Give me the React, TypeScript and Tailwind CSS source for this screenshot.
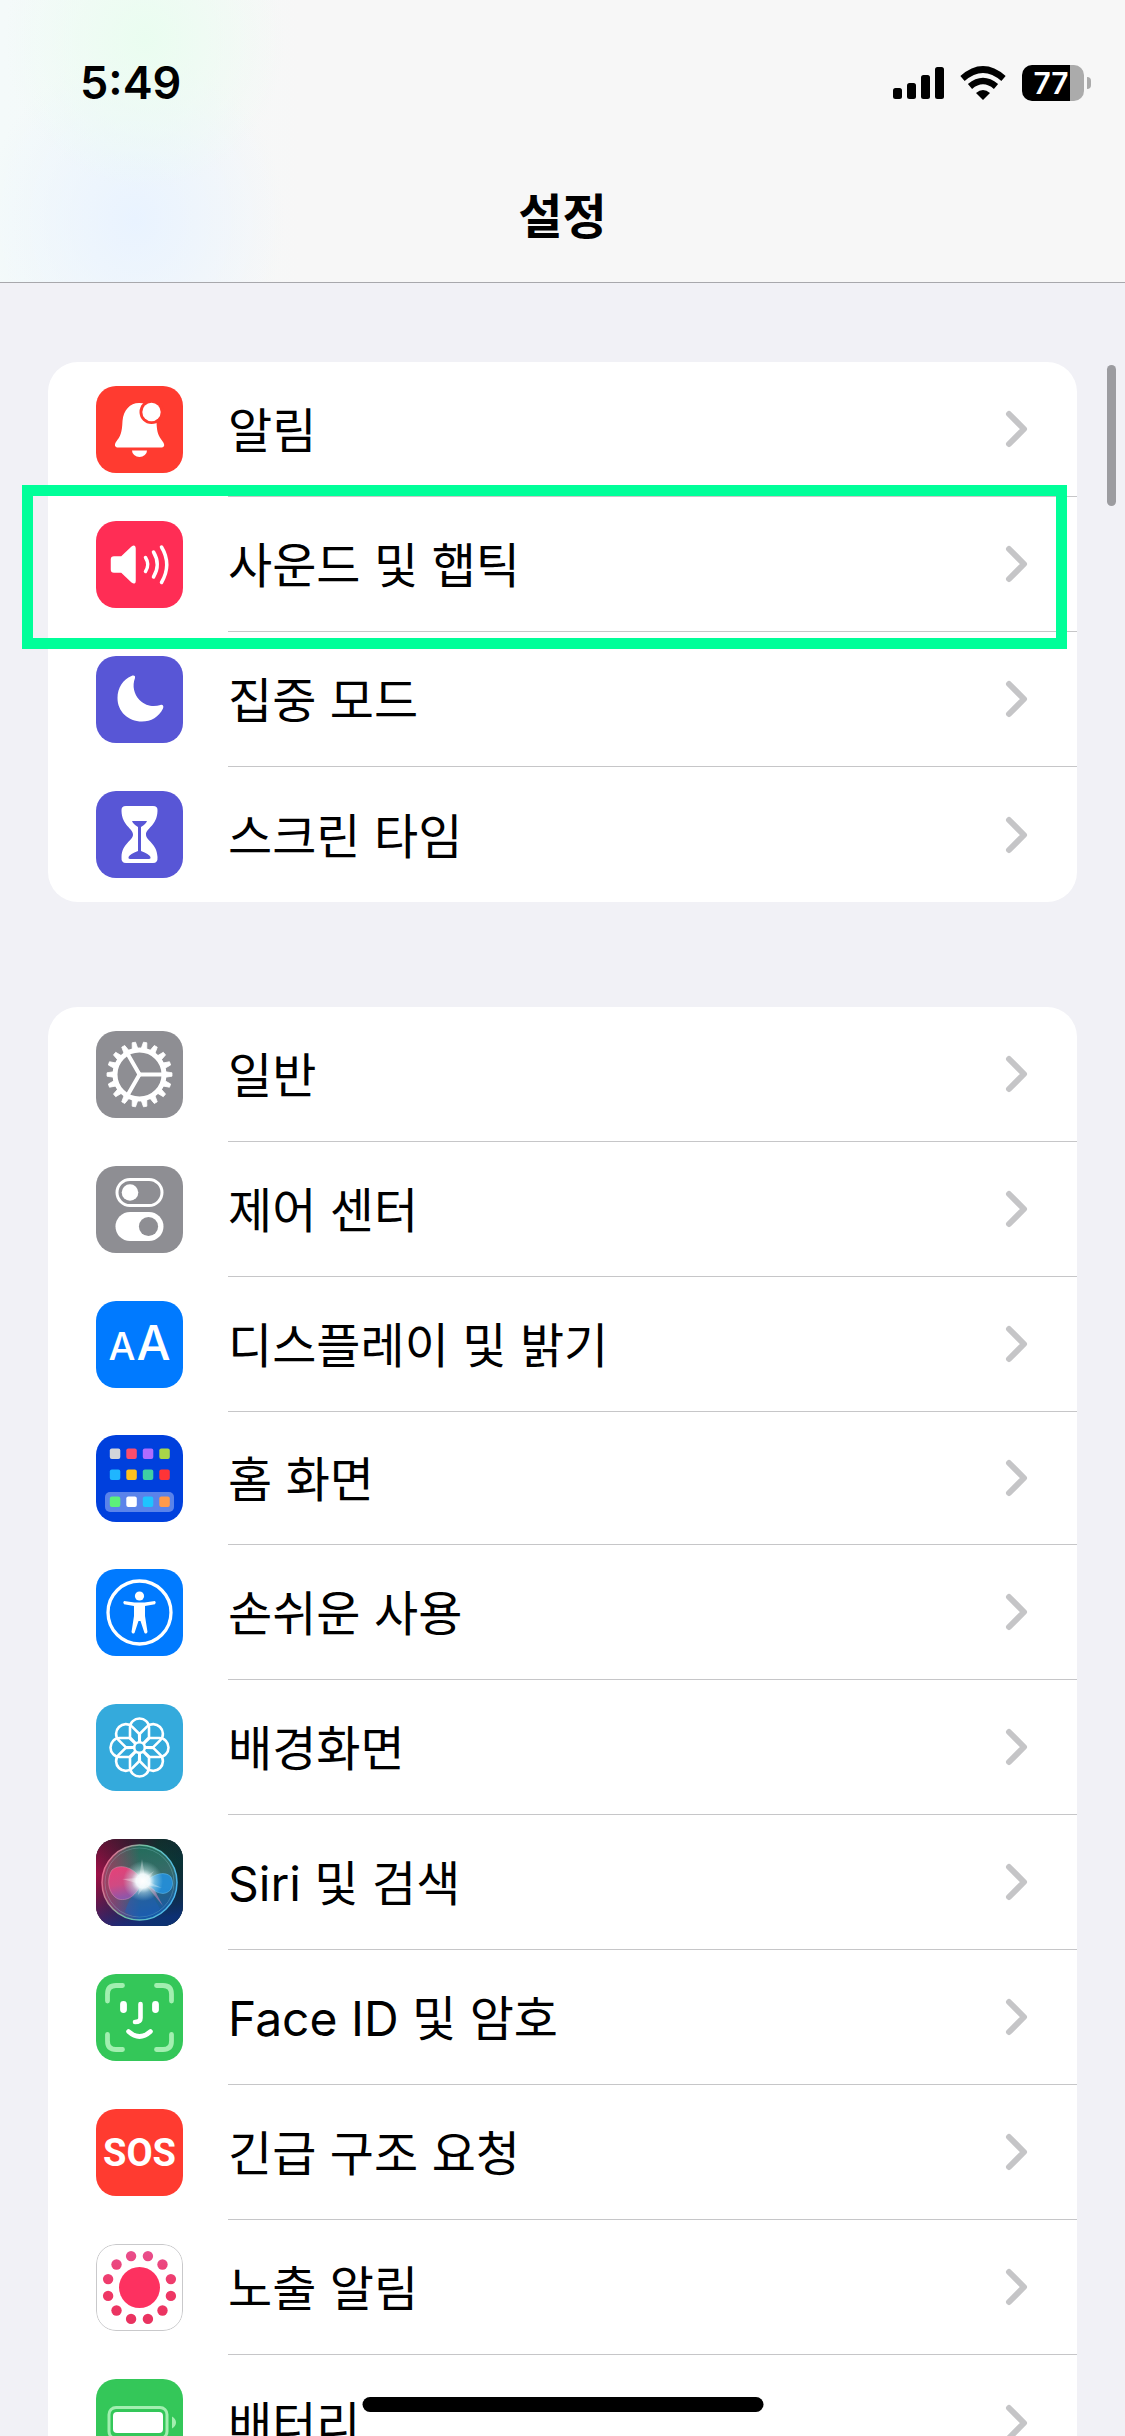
import React from "react";

const KO = "font-['Inter','Noto_Sans_CJK_KR',sans-serif]";

type GlyphProps = { children: React.ReactNode };

function Glyph({ children }: GlyphProps) {
  return (
    <svg viewBox="0 0 87 87" className="block size-full" aria-hidden="true">
      {children}
    </svg>
  );
}

const Bell = () => (
  <Glyph>
    <path
      d="M43 17C34 17 27.500 24 26.500 35C26 47 24.500 50 20 56C18 59 19 61.500 22 61.500H65C68.500 61.500 69 59 67 56C62 49 61 47 60.500 36C60 25 53 17 43 17Z"
      fill="#fff"
    />
    <path d="M36 64.500H51A7.500 6.500 0 0 1 36 64.500Z" fill="#fff" />
    <circle cx="55.500" cy="26" r="12" fill="#ff3b30" />
    <circle cx="55.500" cy="26" r="9.200" fill="#fff" />
  </Glyph>
);

const Speaker = () => (
  <Glyph>
    <path
      d="M18 36H25.500L36 26Q39 24 39 27.500V60Q39 63 36 61L25.500 51H18Q15.500 51 15.500 48.500V38.500Q15.500 36 18 36Z"
      fill="#fff"
      stroke="#fff"
      strokeWidth="1.500"
      strokeLinejoin="round"
    />
    <g fill="none" stroke="#fff" strokeWidth="3.500" strokeLinecap="round">
      <path d="M49.500 36.500Q54 43.500 49.500 50.500" />
      <path d="M57.500 31Q65 43.500 57.500 56" />
      <path d="M65.500 26Q76 43.500 65.500 61.500" />
    </g>
  </Glyph>
);

const Moon = () => (
  <Glyph>
    <path
      d="M35.500 20C37.500 19 39.500 19.500 39 22C36 30 38 38 43.500 44C50 50.500 58 51 64.500 49C67 48.300 68 50.500 67 52.500C63 61 55 65.500 46 65.500C32 65.500 21.500 55.500 21.500 42C21.500 32 27 23.500 35.500 20Z"
      fill="#fff"
    />
  </Glyph>
);

const Hourglass = () => (
  <Glyph>
    <path
      d="M30 15H57Q62 15 61.500 20C61 35 50 37 50 43.500C50 50 61 52 61.500 66Q62 72 57 72H30Q25 72 25.500 66C26 52 37 50 37 43.500C37 37 26 35 25.500 20Q25 15 30 15Z"
      fill="#fff"
    />
    <path
      d="M36 30H51Q50 33 45 36V60Q53 63 54.500 66Q55 68 53 68H34Q32 68 32.500 66Q34 63 42 60V36Q37 33 36 30Z"
      fill="#5856d6"
    />
  </Glyph>
);

const Gear = () => (
  <Glyph>
    <circle cx="43.500" cy="43.500" r="24.500" fill="none" stroke="#fff" strokeWidth="5" />
    {Array.from({ length: 18 }, (_, i) => (
      <path
        key={i}
        d="M40.500 19L41.800 11H45.200L46.500 19Z"
        fill="#fff"
        stroke="#fff"
        strokeWidth="0.800"
        strokeLinejoin="round"
        transform={`rotate(${i * 20 + 10} 43.500 43.500)`}
      />
    ))}
    {[90, 210, 330].map((a) => (
      <path
        key={a}
        d="M43.500 43.500V19"
        stroke="#fff"
        strokeWidth="4"
        strokeLinecap="round"
        transform={`rotate(${a} 43.500 43.500)`}
      />
    ))}
  </Glyph>
);

const Toggles = () => (
  <Glyph>
    <rect x="21" y="13.500" width="45" height="26" rx="13" fill="none" stroke="#fff" strokeWidth="3" />
    <circle cx="34" cy="26.500" r="8.300" fill="#fff" />
    <rect x="19.500" y="46" width="48" height="29" rx="14.500" fill="#fff" />
    <circle cx="52.500" cy="60.500" r="9.600" fill="#8e8e93" />
  </Glyph>
);

const LetterSizes = () => (
  <span className="flex size-full items-baseline justify-center gap-px pt-3 font-['Inter',sans-serif] font-medium leading-[60px] text-white">
    <span className="text-[38px]">A</span>
    <span className="text-[48px]">A</span>
  </span>
);

const homeApps: { y: number; colors: string[] }[] = [
  { y: 13.5, colors: ["#d3d6da", "#fb4d6d", "#b06cff", "#a9d548"] },
  { y: 34.5, colors: ["#1fb6ff", "#ffc11d", "#3fd0a4", "#ff3437"] },
  { y: 61.5, colors: ["#5cf07a", "#ffffff", "#1fc4ff", "#ff9a4a"] },
];

const HomeGrid = () => (
  <Glyph>
    <rect x="9" y="57" width="69" height="20" rx="5" fill="#5a83ea" />
    {homeApps.map((row) =>
      row.colors.map((c, i) => (
        <rect key={c} x={13.8 + i * 16.5} y={row.y} width="10.500" height="10.500" rx="2" fill={c} />
      )),
    )}
  </Glyph>
);

const Person = () => (
  <Glyph>
    <circle cx="43.500" cy="43.500" r="31.500" fill="none" stroke="#fff" strokeWidth="3.300" />
    <circle cx="43.500" cy="27" r="4.600" fill="#fff" />
    <path
      d="M28 32L38.500 33.500H48.500L59 32Q60.500 33.500 59 35.200L49 37V47L51.500 63Q50.500 65.500 48.500 64L44.500 52H42.500L38.500 64Q36.500 65.500 35.500 63L38 47V37L28 35.200Q26.500 33.500 28 32Z"
      fill="#fff"
    />
  </Glyph>
);

const Flower = () => (
  <Glyph>
    {Array.from({ length: 8 }, (_, i) => (
      <path
        key={i}
        d="M43.500 43.500L34 33.500V23.500A9.500 9 0 0 1 53 23.500V33.500Z"
        fill="none"
        stroke="#fff"
        strokeWidth="2.600"
        strokeLinejoin="round"
        transform={`rotate(${i * 45} 43.500 43.500)`}
      />
    ))}
    <circle cx="43.500" cy="43.500" r="5.300" fill="#34aadc" stroke="#fff" strokeWidth="2.600" />
  </Glyph>
);

const Siri = () => (
  <Glyph>
    <defs>
      <linearGradient id="siri-bg" x1="0" y1="0.400" x2="1" y2="0.450">
        <stop offset="0" stopColor="#a01048" />
        <stop offset="0.350" stopColor="#501a3a" />
        <stop offset="0.700" stopColor="#0c3a34" />
        <stop offset="1" stopColor="#0a3238" />
      </linearGradient>
      <linearGradient id="siri-floor" x1="0" y1="0" x2="0.150" y2="1">
        <stop offset="0" stopColor="#1c1820" stopOpacity="0.500" />
        <stop offset="0.400" stopColor="#1c1820" stopOpacity="0" />
        <stop offset="1" stopColor="#0d2f86" stopOpacity="0.750" />
      </linearGradient>
      <linearGradient id="siri-orb" x1="0.300" y1="0" x2="0.600" y2="1">
        <stop offset="0" stopColor="#1b7a60" />
        <stop offset="0.450" stopColor="#3d7470" />
        <stop offset="1" stopColor="#1560b8" />
      </linearGradient>
      <linearGradient id="siri-shade" x1="0" y1="0.500" x2="0.500" y2="0.500">
        <stop offset="0" stopColor="#d02a60" stopOpacity="0.700" />
        <stop offset="1" stopColor="#d02a60" stopOpacity="0" />
      </linearGradient>
      <linearGradient id="siri-rim" x1="0" y1="0.300" x2="1" y2="0.600">
        <stop offset="0" stopColor="#f0628e" />
        <stop offset="0.450" stopColor="#6fc3a4" />
        <stop offset="1" stopColor="#49b7f2" />
      </linearGradient>
      <linearGradient id="siri-pink" x1="0.200" y1="0" x2="0.400" y2="1">
        <stop offset="0" stopColor="#f0407a" />
        <stop offset="0.550" stopColor="#d84a86" />
        <stop offset="1" stopColor="#8c58b4" />
      </linearGradient>
      <radialGradient id="siri-glow">
        <stop offset="0" stopColor="#fff" />
        <stop offset="0.350" stopColor="#f4fdff" stopOpacity="0.950" />
        <stop offset="0.600" stopColor="#d0f4f4" stopOpacity="0.450" />
        <stop offset="1" stopColor="#b8f0f2" stopOpacity="0" />
      </radialGradient>
    </defs>
    <rect width="87" height="87" fill="url(#siri-bg)" />
    <rect width="87" height="87" fill="url(#siri-floor)" />
    <circle cx="43.500" cy="43.500" r="37.500" fill="url(#siri-orb)" fillOpacity="0.850" />
    <circle cx="43.500" cy="43.500" r="37.500" fill="url(#siri-shade)" stroke="url(#siri-rim)" strokeWidth="1.500" />
    <circle cx="43.500" cy="43.500" r="34.500" fill="none" stroke="#9fe0e8" strokeOpacity="0.250" strokeWidth="1" />
    <path d="M47 44C37 53 31 65 29 73C40 80 55 79 64 70C58 58 53 51 47 44Z" fill="#1f5fb8" fillOpacity="0.500" />
    <path
      d="M47 42C38 28 24 24 16 31C10 40 12 55 22 60C34 63 41 54 47 42Z"
      fill="url(#siri-pink)"
      fillOpacity="0.900"
      stroke="#f8a0c0"
      strokeOpacity="0.500"
      strokeWidth="0.800"
    />
    <path
      d="M50 43C58 34 70 32 75 38C79 46 75 54 67 54.500C59 54 55 49 50 43Z"
      fill="#2590dc"
      fillOpacity="0.900"
      stroke="#6cc8f8"
      strokeOpacity="0.600"
      strokeWidth="0.800"
    />
    <path d="M50 46L67 67L58 50Z" fill="#e58fc0" fillOpacity="0.500" />
    <circle cx="47" cy="42" r="20" fill="url(#siri-glow)" />
    <path d="M46 20L49 38L58 32L51 42L66 49L50 46L42 56L44 45L26 40L43 39Z" fill="#fff" fillOpacity="0.300" />
  </Glyph>
);

const Face = () => (
  <Glyph>
    <g fill="none" strokeLinecap="round">
      <g stroke="#a2efb0" strokeWidth="4.800">
        <path d="M11.500 27V20Q11.500 11.500 20 11.500H26.500" />
        <path d="M60.500 11.500H67Q75.500 11.500 75.500 20V27" />
        <path d="M11.500 60.500V67Q11.500 75.500 20 75.500H26.500" />
        <path d="M60.500 75.500H67Q75.500 75.500 75.500 67V60.500" />
      </g>
      <g stroke="#fff">
        <path d="M27.500 30.500V35.500M59.500 30.500V35.500" strokeWidth="6.800" />
        <path d="M44.500 30V44Q44.500 48 39 48" strokeWidth="4.600" />
        <path d="M32.500 57.500Q43.500 67.500 54.500 57.500" strokeWidth="4.600" />
      </g>
    </g>
  </Glyph>
);

const Sos = () => (
  <span className="flex size-full items-center justify-center font-['Roboto',sans-serif] text-[38px] font-bold leading-none text-white">
    SOS
  </span>
);

const Exposure = () => (
  <Glyph>
    <defs>
      <linearGradient id="exposure" gradientUnits="userSpaceOnUse" x1="0" y1="5" x2="0" y2="82">
        <stop offset="0" stopColor="#e8508f" />
        <stop offset="0.500" stopColor="#f03866" />
        <stop offset="1" stopColor="#e8325f" />
      </linearGradient>
    </defs>
    <rect x="0.500" y="0.500" width="86" height="86" rx="19.500" fill="#fff" stroke="#c9c9cb" />
    <circle cx="43.500" cy="43.500" r="20.500" fill="#fd3160" />
    <g fill="url(#exposure)">
      {Array.from({ length: 12 }, (_, i) => {
        const a = ((i * 30 + 15) * Math.PI) / 180;
        return <circle key={i} cx={43.5 + 32.5 * Math.cos(a)} cy={43.5 + 32.5 * Math.sin(a)} r="5.200" />;
      })}
    </g>
  </Glyph>
);

const Battery = () => (
  <Glyph>
    <rect x="13" y="28.500" width="58" height="31" rx="7" fill="none" stroke="#a2efb0" strokeWidth="3" />
    <rect x="17" y="33" width="50" height="21" rx="4" fill="#fff" />
    <path d="M76 37.500Q80 40 80 43.500Q80 47 76 49.500Z" fill="#a2efb0" />
  </Glyph>
);

type Item = { label: string; tile: string; icon: React.ReactNode; height?: string };

const groups: { name: string; items: Item[] }[] = [
  {
    name: "alerts",
    items: [
      { label: "알림", tile: "bg-[#ff3b30]", icon: <Bell /> },
      { label: "사운드 및 햅틱", tile: "bg-[#ff2d55]", icon: <Speaker /> },
      { label: "집중 모드", tile: "bg-[#5856d6]", icon: <Moon /> },
      { label: "스크린 타임", tile: "bg-[#5856d6]", icon: <Hourglass /> },
    ],
  },
  {
    name: "device",
    items: [
      { label: "일반", tile: "bg-[#8e8e93]", icon: <Gear /> },
      { label: "제어 센터", tile: "bg-[#8e8e93]", icon: <Toggles /> },
      { label: "디스플레이 및 밝기", tile: "bg-[#007aff]", icon: <LetterSizes /> },
      { label: "홈 화면", tile: "bg-[#0040dd]", icon: <HomeGrid />, height: "h-[133px]" },
      { label: "손쉬운 사용", tile: "bg-[#007aff]", icon: <Person /> },
      { label: "배경화면", tile: "bg-[#34aadc]", icon: <Flower /> },
      { label: "Siri 및 검색", tile: "bg-[#142a3a]", icon: <Siri /> },
      { label: "Face ID 및 암호", tile: "bg-[#34c759]", icon: <Face /> },
      { label: "긴급 구조 요청", tile: "bg-[#ff3b30]", icon: <Sos /> },
      { label: "노출 알림", tile: "bg-white", icon: <Exposure /> },
      { label: "배터리", tile: "bg-[#34c759]", icon: <Battery /> },
    ],
  },
];

function Row({ item, last }: { item: Item; last: boolean }) {
  return (
    <li className="relative">
      <a href="#" className={`flex items-center pl-12 ${item.height ?? "h-[135px]"}`}>
        <span className={`size-[87px] shrink-0 overflow-hidden rounded-[20px] ${item.tile}`}>{item.icon}</span>
        <span
          className={`ml-[45px] flex h-full flex-1 items-center justify-between pr-12 ${
            last ? "" : "border-b border-[#c6c6c8]"
          }`}
        >
          <span className="pt-1 text-[48px] leading-[60px] text-black">{item.label}</span>
          <svg viewBox="0 0 24 40" className="h-10 w-6" fill="none" aria-hidden="true">
            <path
              d="M4 5L19 20L4 35"
              stroke="#c5c5c7"
              strokeWidth="6"
              strokeLinecap="round"
              strokeLinejoin="round"
            />
          </svg>
        </span>
      </a>
      {item.label === "사운드 및 햅틱" && (
        <span className="pointer-events-none absolute -top-3 -bottom-[17px] -left-[26px] right-[10px] z-10 border-[11px] border-[#00ff99]" />
      )}
    </li>
  );
}

function StatusBar() {
  return (
    <div className="flex items-center justify-between pt-[61px] pr-[34px] pl-20">
      <time className="text-[45px] font-semibold leading-[44px]">5:49</time>
      <div className="flex items-center gap-4">
        <svg viewBox="0 0 51 34" className="h-[34px] w-[51px]" aria-label="신호">
          <rect x="0" y="22" width="9" height="11" rx="2.500" />
          <rect x="14" y="17" width="9" height="16" rx="2.500" />
          <rect x="28" y="9" width="9" height="24" rx="2.500" />
          <rect x="42" y="1" width="9" height="32" rx="2.500" />
        </svg>
        <svg viewBox="0 0 46 34" className="h-[34px] w-[46px]" aria-label="Wi-Fi">
          <path d="M23 34L16 27Q23 21 30 27Z" />
          <g fill="none" stroke="#000" strokeWidth="6.500">
            <path d="M2.500 12.500Q23 -5.500 43.500 12.500" />
            <path d="M10 20.500Q23 9.500 36 20.500" />
          </g>
        </svg>
        <div className="flex items-center gap-[3px]">
          <span className="flex h-9 w-[62px] items-center justify-center rounded-[10px] bg-[linear-gradient(90deg,#000_77%,#ababab_77%)] pr-1 text-[30px] font-semibold leading-none text-white">
            77
          </span>
          <span className="h-3 w-1 rounded-r-full bg-[#ababab]" />
        </div>
      </div>
    </div>
  );
}

export default function App() {
  return (
    <div className={`relative flex h-screen flex-col overflow-hidden bg-[#f1f1f6] text-black ${KO}`}>
      <header className="flex h-[283px] shrink-0 flex-col border-b border-[#a8a8ac] bg-[#f7f7f7] bg-[radial-gradient(ellipse_140px_150px_at_145px_40px,#eafdf0,transparent),radial-gradient(ellipse_150px_170px_at_135px_220px,#e9f3ff,transparent),linear-gradient(90deg,#f4fafa,#f7f7f7_300px)]">
        <StatusBar />
        <h1 className="mt-[77px] text-center text-[48px] font-semibold leading-[70px]">설정</h1>
      </header>

      <main className="flex min-h-0 flex-1 flex-col gap-[105px] overflow-y-auto px-12 pt-[79px] [scrollbar-width:none]">
        {groups.map((group) => (
          <ul key={group.name} className="shrink-0 rounded-[30px] bg-white">
            {group.items.map((item, i) => (
              <Row key={item.label} item={item} last={i === group.items.length - 1} />
            ))}
          </ul>
        ))}
      </main>

      <span className="absolute top-[365px] right-[9px] h-[141px] w-[9px] rounded-full bg-[#9c9ca0]" />
      <span className="absolute bottom-6 left-1/2 h-[15px] w-[401px] -translate-x-1/2 rounded-full bg-black" />
    </div>
  );
}
